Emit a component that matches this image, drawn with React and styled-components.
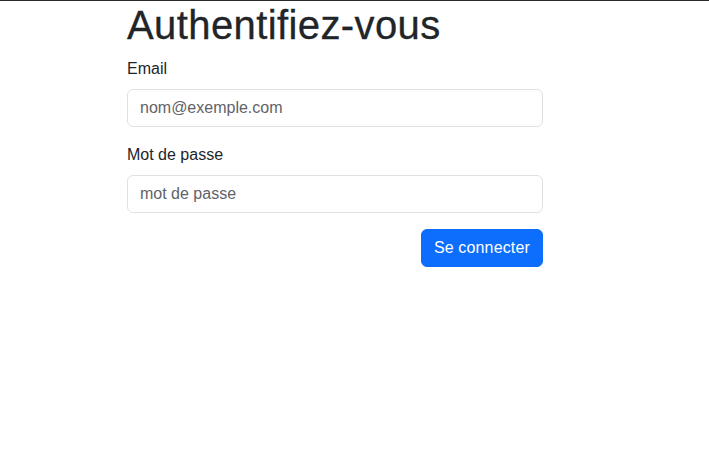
import React from "react";
import styled, { createGlobalStyle } from "styled-components";

const GlobalStyle = createGlobalStyle`
    *, *::before, *::after {
        box-sizing: border-box;
    }
    body {
        margin: 0;
        background: #fff;
        color: #212529;
        font-family: "Liberation Sans", Arial, sans-serif;
        font-size: 16px;
        line-height: 1.5;
    }
`;

const TopRule = styled.div`
    height: 1px;
    background-color: #2b2b2b;
`;

const Page = styled.div`
    padding-left: 127px;
`;

const Form = styled.form`
    width: 416px;
    display: flex;
    flex-direction: column;
`;

const Title = styled.h1`
    margin: 0 0 8px;
    font-size: 40px;
    font-weight: 500;
    line-height: 1.2;
    letter-spacing: 0.4px;
    color: #212529;
    -webkit-text-stroke: 0.3px #212529;
`;

const Field = styled.div`
    display: flex;
    flex-direction: column;
    margin-bottom: 16px;
`;

const Label = styled.label`
    display: block;
    margin-bottom: 8px;
    font-size: 16px;
    line-height: 24px;
`;

const Input = styled.input`
    display: block;
    width: 100%;
    height: 38px;
    padding: 6px 12px;
    font-family: inherit;
    font-size: 16px;
    line-height: 24px;
    color: #212529;
    background-color: #fff;
    border: 1px solid #dee2e6;
    border-radius: 6px;
    outline: none;

    &::placeholder {
        color: #5f6368;
        opacity: 1;
    }
`;

const Actions = styled.div`
    display: flex;
    justify-content: flex-end;
`;

const Button = styled.button`
    height: 38px;
    padding: 6px 12px;
    font-family: inherit;
    font-size: 16px;
    line-height: 24px;
    letter-spacing: 0.15px;
    color: #fff;
    background-color: #0d6efd;
    border: 1px solid #0d6efd;
    border-radius: 6px;
    cursor: pointer;
`;

const App = () => {
    return (
        <>
            <GlobalStyle />
            <TopRule />
            <Page>
                <Form onSubmit={(e) => e.preventDefault()}>
                    <Title>Authentifiez-vous</Title>
                    <Field>
                        <Label htmlFor="email">Email</Label>
                        <Input id="email" type="email" placeholder="nom@exemple.com" />
                    </Field>
                    <Field>
                        <Label htmlFor="password">Mot de passe</Label>
                        <Input id="password" type="password" placeholder="mot de passe" />
                    </Field>
                    <Actions>
                        <Button type="submit">Se connecter</Button>
                    </Actions>
                </Form>
            </Page>
        </>
    );
};

export default App;
